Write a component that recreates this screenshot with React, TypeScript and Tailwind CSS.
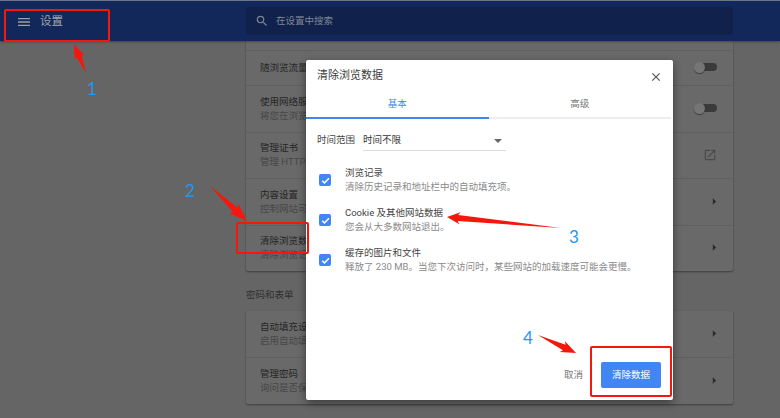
const Arrow = ({ tail, tip, width = 8, head = 14 }: { tail: number[]; tip: number[]; width?: number; head?: number }) => {
  // tapered annotation arrow, thin at the tail
  const dx = tip[0] - tail[0];
  const dy = tip[1] - tail[1];
  const len = Math.hypot(dx, dy);
  const ux = dx / len;
  const uy = dy / len;
  const nx = -uy;
  const ny = ux;
  const bx = tip[0] - ux * head;
  const by = tip[1] - uy * head;
  const pts = [
    tail,
    [bx + (nx * width) / 4, by + (ny * width) / 4],
    [bx + nx * (width / 2) - ux * 2, by + ny * (width / 2) - uy * 2],
    tip,
    [bx - nx * (width / 2) - ux * 2, by - ny * (width / 2) - uy * 2],
    [bx - (nx * width) / 4, by - (ny * width) / 4],
  ];
  return <polygon points={pts.map((p) => p.join(",")).join(" ")} fill="#f5170c" />;
};

const Caret = () => (
  <svg viewBox="0 0 6 8" className="w-[5px] h-[7px] fill-[#2c2c2c]">
    <path d="M1 0l4 4-4 4z" />
  </svg>
);

const Toggle = () => (
  <div className="relative w-[23px] h-[11px] flex items-center justify-end">
    <div className="w-[19px] h-[8px] rounded-full bg-[#3a3a3a]" />
    <div className="absolute left-0 top-0 w-[11px] h-[11px] rounded-full bg-[#757575] shadow-[0_1px_1px_rgba(0,0,0,0.4)]" />
  </div>
);

const Launch = () => (
  <svg viewBox="0 0 24 24" className="w-[14px] h-[14px] fill-[#4a4a4a]">
    <path d="M19 19H5V5h7V3H5c-1.11 0-2 .9-2 2v14c0 1.1.89 2 2 2h14c1.1 0 2-.9 2-2v-7h-2v7zM14 3v2h3.59l-9.83 9.83 1.41 1.41L19 6.41V10h2V3h-7z" />
  </svg>
);

const Row = ({ title, sub, right, h }: { title: string; sub?: string; right: React.ReactNode; h: string }) => (
  <div className={`flex items-center justify-between pl-[14px] pr-[16px] pb-[2px] border-t border-[#5f5f5f] ${h}`}>
    {/* the dialog covers everything past 46px, so clip there */}
    <div className="w-[46px] overflow-hidden flex flex-col gap-[3px] text-[9.5px] leading-[11px] whitespace-nowrap">
      <div className="text-[#262626]">{title}</div>
      {sub && <div className="text-[#474747]">{sub}</div>}
    </div>
    <div className="w-[23px] flex justify-end">{right}</div>
  </div>
);

const Check = () => (
  <div className="w-[12px] h-[12px] rounded-[2px] bg-[#4285f4] flex items-center justify-center shrink-0">
    <svg viewBox="0 0 24 24" className="w-[11px] h-[11px] fill-none stroke-white stroke-[3.4]">
      <path d="M5 12.5l4.8 4.8L19.5 7" />
    </svg>
  </div>
);

const Option = ({ title, sub }: { title: string; sub: string }) => (
  <div className="flex items-center gap-[14px] h-[40px]">
    <Check />
    <div className="flex flex-col gap-[3px] pb-[2px] text-[9.5px] leading-[11px] whitespace-nowrap">
      <div className="text-[#444]">{title}</div>
      <div className="text-[#8a8a8a]">{sub}</div>
    </div>
  </div>
);

const Dialog = () => (
  <div className="absolute left-[306px] top-[60px] w-[367px] h-[340px] bg-white rounded-[2px] shadow-[0_3px_8px_rgba(0,0,0,0.45)] flex flex-col">
    <div className="flex items-center justify-between h-[32px] pt-[1px] pl-[11px] pr-[10px] shrink-0">
      <div className="text-[11px] text-[#3c3c3c]">清除浏览数据</div>
      <svg viewBox="0 0 24 24" className="w-[14px] h-[14px] fill-[#555]">
        <path d="M19 6.41L17.59 5 12 10.59 6.41 5 5 6.41 10.59 12 5 17.59 6.41 19 12 13.41 17.59 19 19 17.59 13.41 12z" />
      </svg>
    </div>
    <div className="flex h-[27px] shrink-0 text-[9.5px]">
      <div className="flex-1 flex items-center justify-center text-[#4285f4] border-b-2 border-[#4285f4]">基本</div>
      <div className="flex-1 flex items-center justify-center text-[#777] border-b-2 border-[#eee] mr-[2px]">高级</div>
    </div>
    <div className="flex items-center gap-[8px] pl-[11px] mt-[14px] h-[14px] text-[9.5px] text-[#444]">
      <span>时间范围</span>
      <div className="w-[143px] h-[18px] pb-[1px] flex items-center justify-between border-b border-[#ddd] pr-[4px] mt-[3px]">
        <span className="text-[#333]">时间不限</span>
        <div className="w-0 h-0 border-x-[4px] border-x-transparent border-t-[4px] border-t-[#666]" />
      </div>
    </div>
    <div className="flex flex-col pl-[13px] mt-[13px]">
      <Option title="浏览记录" sub="清除历史记录和地址栏中的自动填充项。" />
      <Option title="Cookie 及其他网站数据" sub="您会从大多数网站退出。" />
      <Option title="缓存的图片和文件" sub="释放了 230 MB。当您下次访问时，某些网站的加载速度可能会更慢。" />
    </div>
    <div className="mt-auto flex items-center justify-end gap-[18px] pr-[12px] pb-[12px]">
      <span className="text-[9.5px] text-[#777]">取消</span>
      <div className="w-[60px] h-[26px] rounded-[2px] bg-[#4285f4] text-white text-[9.5px] flex items-center justify-center">清除数据</div>
    </div>
  </div>
);

const Digit = ({ n, pos }: { n: string; pos: string }) => (
  <div className={`absolute text-[17px] leading-[20px] text-[#2196f3] font-['Lato',sans-serif] ${pos}`}>{n}</div>
);

export default function App() {
  return (
    <div className="relative w-[780px] h-[418px] overflow-hidden bg-[#656565] font-['Roboto','Noto_Sans_CJK_SC',sans-serif]">
      <header className="relative h-[41px] bg-[#13285a] border-t border-[#6b7488] shadow-[0_1px_2px_rgba(0,0,0,0.35)] flex items-center">
        <div className="w-[246px] flex items-center pl-[16px] pt-[2px] gap-[8px]">
          <svg viewBox="0 0 24 24" className="w-[16px] h-[16px] fill-[#9a9ea8]">
            <path d="M3 18h18v-2H3v2zm0-5h18v-2H3v2zm0-7v2h18V6H3z" />
          </svg>
          <span className="text-[11.5px] text-[#a0a3ab]">设置</span>
        </div>
        <div className="w-[487px] h-[28px] rounded-[2px] bg-[#10224c] flex items-center pl-[9px] gap-[7px]">
          <svg viewBox="0 0 24 24" className="w-[14px] h-[14px] fill-[#7f8595]">
            <path d="M15.5 14h-.79l-.28-.27A6.47 6.47 0 0 0 16 9.5 6.5 6.5 0 1 0 9.5 16c1.61 0 3.09-.59 4.23-1.57l.27.28v.79l5 4.99L20.49 19l-4.99-5zm-6 0C7.01 14 5 11.99 5 9.5S7.01 5 9.5 5 14 7.01 14 9.5 11.99 14 9.5 14z" />
          </svg>
          <span className="text-[9.5px] text-[#7f8595]">在设置中搜索</span>
        </div>
      </header>

      <main className="ml-[246px] w-[487px] flex flex-col">
        <div className="bg-[#696969] rounded-b-[2px] shadow-[0_1px_2px_rgba(0,0,0,0.4)] flex flex-col">
          <div className="h-[9px]" />
          <Row h="h-[35px]" title="随浏览流量一起发送“请勿跟踪”请求" right={<Toggle />} />
          <Row h="h-[47px]" title="使用网络服务帮助解决拼写错误" sub="将您在浏览器中输入的内容发送给 Google" right={<Toggle />} />
          <Row h="h-[46px]" title="管理证书" sub="管理 HTTPS/SSL 证书和设置" right={<Launch />} />
          <Row h="h-[47px]" title="内容设置" sub="控制网站可以使用哪些信息" right={<Caret />} />
          <Row h="h-[46px]" title="清除浏览数据" sub="清除浏览记录、Cookie、缓存及其他数据" right={<Caret />} />
        </div>
        <div className="h-[40px] pt-[8px] flex items-center text-[9.5px] text-[#303030]">密码和表单</div>
        <div className="bg-[#696969] rounded-[2px] shadow-[0_1px_2px_rgba(0,0,0,0.4)] flex flex-col">
          <Row h="h-[46px] border-t-0" title="自动填充设置" sub="启用自动填充功能后，只需点击一次即可填写表单" right={<Caret />} />
          <Row h="h-[47px]" title="管理密码" sub="询问是否保存您在网站上输入的密码" right={<Caret />} />
        </div>
      </main>

      <Dialog />

      {/* annotations drawn over the screenshot */}
      <div className="absolute left-[4px] top-[9px] w-[106px] h-[33px] border-2 border-[#f5170c] rounded-[2px]" />
      <div className="absolute left-[236px] top-[222px] w-[73px] h-[32px] border-2 border-[#f5170c] rounded-[2px]" />
      <div className="absolute left-[590px] top-[346px] w-[82px] h-[51px] border-2 border-[#f5170c] rounded-[2px]" />
      <svg className="absolute left-0 top-0 w-[780px] h-[418px] pointer-events-none" viewBox="0 0 780 418">
        <Arrow tail={[86, 73]} tip={[74, 44]} width={11} head={13} />
        <Arrow tail={[210, 186]} tip={[247, 221]} width={13} head={16} />
        <Arrow tail={[561, 228]} tip={[447, 217]} width={12} head={11} />
        <Arrow tail={[538, 335]} tip={[576, 353]} width={12} head={13} />
      </svg>
      <Digit n="1" pos="left-[87px] top-[79px]" />
      <Digit n="2" pos="left-[185px] top-[181px]" />
      <Digit n="3" pos="left-[569px] top-[227px]" />
      <Digit n="4" pos="left-[523px] top-[328px]" />
    </div>
  );
}
